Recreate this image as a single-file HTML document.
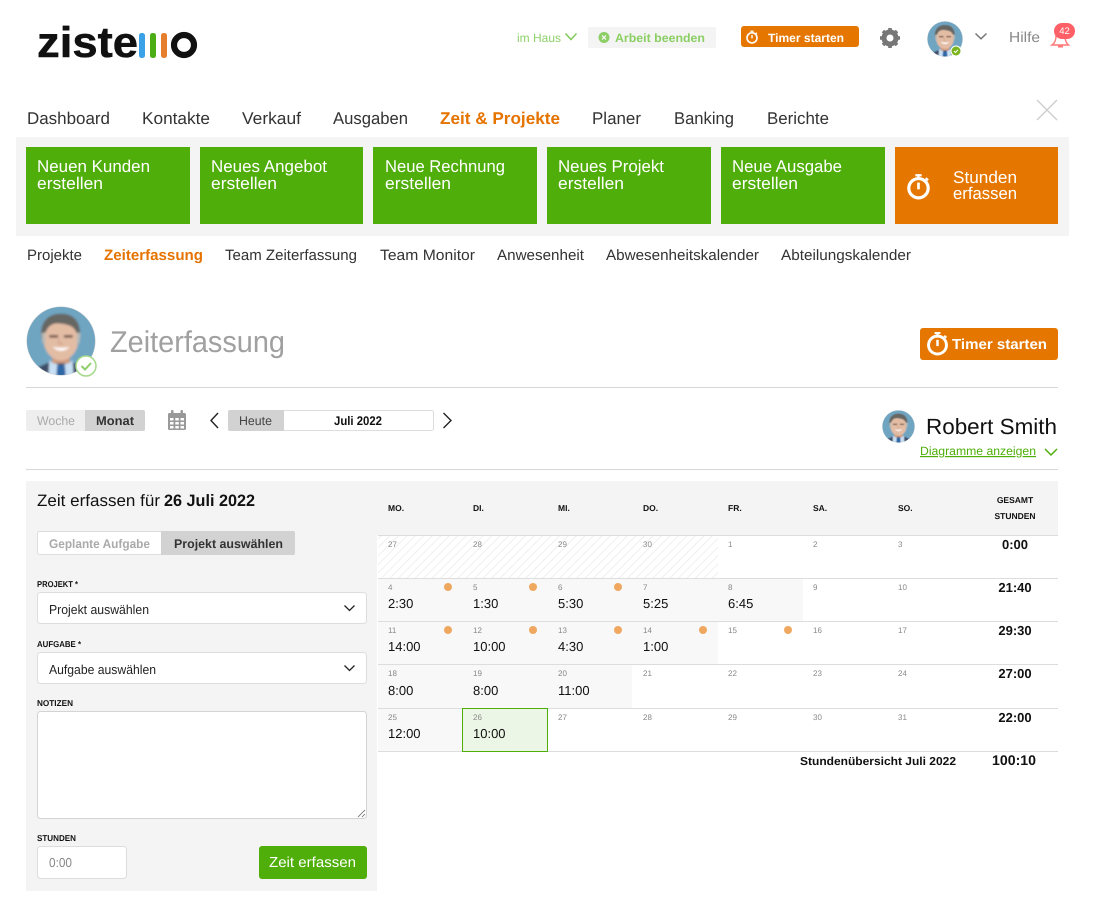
<!DOCTYPE html>
<html lang="de"><head><meta charset="utf-8"><title>Zeiterfassung</title>
<style>
html,body{margin:0;padding:0;background:#fff;width:1115px;height:911px;overflow:hidden}
svg{display:block;font-family:"Liberation Sans",sans-serif;text-rendering:geometricPrecision}
.n{font-size:17px;fill:#333}
.o{font-size:17px;fill:#e57300;font-weight:700}
.w{font-size:17px;fill:#fff}
.s{font-size:15px;fill:#333}
.l{font-size:8.500px;font-weight:700;fill:#111}
.d{font-size:8px;fill:#888}
.h{font-size:13px;fill:#111}
.t{font-size:13px;font-weight:700;fill:#111;text-anchor:middle}
.c{fill:#f0a860}
</style></head><body>
<svg width="1115" height="911" viewBox="0 0 1115 911" xmlns="http://www.w3.org/2000/svg">
<defs>
<pattern id="hatch" width="6" height="6" patternUnits="userSpaceOnUse" patternTransform="rotate(45)"><rect width="6" height="6" fill="#fff"/><rect width="1" height="6" fill="#efefef"/></pattern>
<filter id="soft" x="-10%" y="-10%" width="120%" height="120%"><feGaussianBlur stdDeviation="1"/></filter>
<clipPath id="cc"><circle cx="0" cy="0" r="35"/></clipPath>
<symbol id="av" viewBox="-36 -36 72 72" overflow="visible">
<circle r="35.500" fill="#c9ced2"/>
<g clip-path="url(#cc)"><g filter="url(#soft)">
<rect x="-38" y="-38" width="76" height="76" fill="#6fa5c2"/>
<path d="M-30 38 L-24 27 L-10 21 L10 21 L24 27 L30 38Z" fill="#3f4d68"/>
<path d="M-12 20 L0 26 L12 20 L13 38 L-13 38Z" fill="#c9e0f4"/>
<path d="M-4 25 L4 25 L5 38 L-5 38Z" fill="#2f66a6"/>
<rect x="-9" y="10" width="18" height="13" fill="#cf9c80"/>
<ellipse cx="0" cy="-2" rx="18" ry="22" fill="#e3bca4"/>
<path d="M-20 -2 C-23 -20 -12 -29 1 -28 C14 -28 22 -18 19 -1 L16 -8 C14 -15 8 -17 -1 -18 C-9 -19 -14 -15 -16 -8Z" fill="#666662"/>
<path d="M-20 -8 L-16 -9 L-16 3 L-19 2Z M20 -8 L16 -9 L16 3 L19 2Z" fill="#bdbbb5"/>
<rect x="-12" y="-6" width="9" height="2.500" fill="#6a5044"/><rect x="3" y="-6" width="9" height="2.500" fill="#6a5044"/>
<path d="M-9 6 Q0 14 9 6 Q0 8 -9 6Z" fill="#fff"/>
<path d="M-2 -2 L-2 3 L2 3" fill="none" stroke="#c99a80" stroke-width="1"/>
</g></g>
</symbol>
<symbol id="tm" viewBox="-12 -12 24 24" overflow="visible">
<circle cx="0" cy="1.500" r="8.600" fill="none" stroke="#fff" stroke-width="2.800"/>
<rect x="-2.800" y="-11" width="5.600" height="2" fill="#fff"/><rect x="-1" y="-10" width="2" height="3" fill="#fff"/>
<path d="M6.500-7.500 L8.500-5.500" stroke="#fff" stroke-width="2"/>
<path d="M0 -3.500 V2.500" stroke="#fff" stroke-width="2.400"/>
</symbol>
</defs>

<!-- logo -->
<text x="37" y="57" font-size="43" font-weight="700" fill="#111" stroke="#111" stroke-width="0.500" textLength="101" lengthAdjust="spacingAndGlyphs">ziste</text>
<rect x="139" y="33" width="6" height="25" rx="2.500" fill="#3ba2e8"/>
<rect x="150" y="33" width="6" height="25" rx="2.500" fill="#4cae14"/>
<rect x="161" y="33" width="6" height="25" rx="2.500" fill="#e57f2e"/>
<circle cx="184" cy="45" r="10" fill="none" stroke="#111" stroke-width="6.200"/>

<!-- top bar -->
<text x="517" y="42" font-size="12" fill="#8fd16a" textLength="44" lengthAdjust="spacingAndGlyphs">im Haus</text>
<path d="M565.500 33.500 L571 39.500 L576.500 33.500" fill="none" stroke="#7fca55" stroke-width="1.500"/>
<rect x="588" y="27" width="128" height="21" rx="2" fill="#f4f4f4"/>
<circle cx="604" cy="37.500" r="5.500" fill="#8bcf65"/>
<path d="M602 35.500 L606 39.500 M606 35.500 L602 39.500" stroke="#f4f4f4" stroke-width="1.300"/>
<text x="615" y="42" font-size="12" font-weight="700" fill="#8bcf65" textLength="90" lengthAdjust="spacingAndGlyphs">Arbeit beenden</text>
<rect x="741" y="26" width="118" height="21" rx="3" fill="#e57700"/>
<use href="#tm" x="745" y="30" width="14" height="14"/>
<text x="768" y="42" font-size="12" font-weight="700" fill="#fff" textLength="76" lengthAdjust="spacingAndGlyphs">Timer starten</text>
<g transform="translate(890 38)" fill="#777">
<circle r="6" fill="none" stroke="#777" stroke-width="5"/>
<g stroke="#777" stroke-width="3.600"><path d="M0-10V-7M0 7V10M-10 0H-7M7 0H10M-7-7L-5-5M5 5L7 7M-7 7L-5 5M5-5L7-7"/></g>
</g>
<use href="#av" x="927" y="21" width="36" height="36"/>
<circle cx="956" cy="51" r="5.500" fill="#fff"/><circle cx="956" cy="51" r="4.500" fill="#7ab51d"/>
<path d="M954 51 L955.500 52.500 L958 49.800" fill="none" stroke="#fff" stroke-width="1"/>
<path d="M975.500 33.500 L981 38.800 L986.500 33.500" fill="none" stroke="#777" stroke-width="1.500"/>
<text x="1009" y="42" font-size="14.500" fill="#888" textLength="31" lengthAdjust="spacingAndGlyphs">Hilfe</text>
<path d="M1052 45 C1055 43 1056 40 1056 36 C1056 32 1058 30 1060 30 C1063 30 1065 33 1065 36 C1065 40 1066 43 1068.500 45Z" fill="#fff" stroke="#f77" stroke-width="1.400"/>
<path d="M1058 46.500 H1063" stroke="#f77" stroke-width="2"/>
<rect x="1054" y="23" width="21" height="16" rx="8" fill="#ff5f66"/>
<text x="1064.500" y="34" font-size="9.500" fill="#fff" text-anchor="middle">42</text>

<!-- main nav -->
<text class="n" x="27" y="124" textLength="83" lengthAdjust="spacingAndGlyphs">Dashboard</text>
<text class="n" x="142" y="124" textLength="68" lengthAdjust="spacingAndGlyphs">Kontakte</text>
<text class="n" x="242" y="124" textLength="59" lengthAdjust="spacingAndGlyphs">Verkauf</text>
<text class="n" x="333" y="124" textLength="75" lengthAdjust="spacingAndGlyphs">Ausgaben</text>
<text class="o" x="440" y="124" textLength="120" lengthAdjust="spacingAndGlyphs">Zeit &amp; Projekte</text>
<text class="n" x="592" y="124" textLength="49" lengthAdjust="spacingAndGlyphs">Planer</text>
<text class="n" x="674" y="124" textLength="60" lengthAdjust="spacingAndGlyphs">Banking</text>
<text class="n" x="767" y="124" textLength="62" lengthAdjust="spacingAndGlyphs">Berichte</text>
<path d="M1037 100 L1057 120 M1057 100 L1037 120" stroke="#ccc" stroke-width="1.300"/>

<!-- action band -->
<rect x="16" y="137" width="1053" height="99" fill="#f4f4f4"/>
<rect x="26" y="147" width="164" height="77" fill="#4fae0a"/>
<rect x="200" y="147" width="163" height="77" fill="#4fae0a"/>
<rect x="373" y="147" width="164" height="77" fill="#4fae0a"/>
<rect x="547" y="147" width="164" height="77" fill="#4fae0a"/>
<rect x="721" y="147" width="164" height="77" fill="#4fae0a"/>
<rect x="895" y="147" width="163" height="77" fill="#e57700"/>
<text class="w" x="37" y="172" textLength="113" lengthAdjust="spacingAndGlyphs">Neuen Kunden</text>
<text class="w" x="37" y="189" textLength="66" lengthAdjust="spacingAndGlyphs">erstellen</text>
<text class="w" x="211" y="172" textLength="116" lengthAdjust="spacingAndGlyphs">Neues Angebot</text>
<text class="w" x="211" y="189" textLength="66" lengthAdjust="spacingAndGlyphs">erstellen</text>
<text class="w" x="385" y="172" textLength="120" lengthAdjust="spacingAndGlyphs">Neue Rechnung</text>
<text class="w" x="385" y="189" textLength="66" lengthAdjust="spacingAndGlyphs">erstellen</text>
<text class="w" x="558" y="172" textLength="106" lengthAdjust="spacingAndGlyphs">Neues Projekt</text>
<text class="w" x="558" y="189" textLength="66" lengthAdjust="spacingAndGlyphs">erstellen</text>
<text class="w" x="732" y="172" textLength="110" lengthAdjust="spacingAndGlyphs">Neue Ausgabe</text>
<text class="w" x="732" y="189" textLength="66" lengthAdjust="spacingAndGlyphs">erstellen</text>
<use href="#tm" x="905" y="173" width="27" height="27"/>
<text class="w" x="953" y="183" textLength="64" lengthAdjust="spacingAndGlyphs">Stunden</text>
<text class="w" x="953" y="199" textLength="64" lengthAdjust="spacingAndGlyphs">erfassen</text>

<!-- sub nav -->
<text class="s" x="27" y="260" textLength="55" lengthAdjust="spacingAndGlyphs">Projekte</text>
<text class="s" x="104" y="260" textLength="99" lengthAdjust="spacingAndGlyphs" style="font-weight:700;fill:#e57300">Zeiterfassung</text>
<text class="s" x="225" y="260" textLength="132" lengthAdjust="spacingAndGlyphs">Team Zeiterfassung</text>
<text class="s" x="380" y="260" textLength="95" lengthAdjust="spacingAndGlyphs">Team Monitor</text>
<text class="s" x="497" y="260" textLength="87" lengthAdjust="spacingAndGlyphs">Anwesenheit</text>
<text class="s" x="606" y="260" textLength="153" lengthAdjust="spacingAndGlyphs">Abwesenheitskalender</text>
<text class="s" x="781" y="260" textLength="130" lengthAdjust="spacingAndGlyphs">Abteilungskalender</text>

<!-- page header -->
<use href="#av" x="26" y="306" width="70" height="70"/>
<circle cx="86" cy="366" r="10" fill="#fff" stroke="#a5d98a" stroke-width="1.500"/>
<path d="M81.500 366 L85 369.500 L91 363" fill="none" stroke="#8fcf6c" stroke-width="2"/>
<text x="110" y="352" font-size="30" fill="#a0a0a0" textLength="175" lengthAdjust="spacingAndGlyphs">Zeiterfassung</text>
<rect x="920" y="328" width="138" height="32" rx="3" fill="#e57700"/>
<use href="#tm" x="925" y="331" width="25" height="25"/>
<text x="952" y="349" font-size="14.500" font-weight="700" fill="#fff" textLength="95" lengthAdjust="spacingAndGlyphs">Timer starten</text>
<rect x="26" y="387" width="1032" height="1" fill="#d8d8d8"/>

<!-- toolbar -->
<rect x="26" y="410" width="119" height="21" rx="2" fill="#eee"/>
<path d="M85 410 H143 a2 2 0 0 1 2 2 V429 a2 2 0 0 1 -2 2 H85Z" fill="#d2d2d2"/>
<text x="37" y="425" font-size="12.500" fill="#aaa" textLength="38" lengthAdjust="spacingAndGlyphs">Woche</text>
<text x="96" y="425" font-size="12.500" font-weight="700" fill="#333" textLength="38" lengthAdjust="spacingAndGlyphs">Monat</text>
<g fill="#999">
<rect x="168" y="413" width="18" height="17" rx="1.500"/>
<rect x="171" y="410" width="2.500" height="5" rx="1"/><rect x="180.500" y="410" width="2.500" height="5" rx="1"/>
<g fill="#fff"><rect x="170" y="418" width="3.500" height="2.500"/><rect x="175.300" y="418" width="3.500" height="2.500"/><rect x="180.500" y="418" width="3.500" height="2.500"/>
<rect x="170" y="422" width="3.500" height="2.500"/><rect x="175.300" y="422" width="3.500" height="2.500"/><rect x="180.500" y="422" width="3.500" height="2.500"/>
<rect x="170" y="426" width="3.500" height="2.500"/><rect x="175.300" y="426" width="3.500" height="2.500"/><rect x="180.500" y="426" width="3.500" height="2.500"/></g>
</g>
<path d="M218 413 L211 420.500 L218 428" fill="none" stroke="#222" stroke-width="1.400"/>
<path d="M443.500 413 L451 420.500 L443.500 428" fill="none" stroke="#222" stroke-width="1.400"/>
<rect x="228.500" y="410.500" width="205" height="20" rx="2" fill="#fff" stroke="#ddd"/>
<path d="M284 410 H230 a2 2 0 0 0 -2 2 V429 a2 2 0 0 0 2 2 H284Z" fill="#d2d2d2"/>
<text x="239" y="425" font-size="12.500" fill="#444" textLength="33" lengthAdjust="spacingAndGlyphs">Heute</text>
<text x="334" y="425" font-size="12.500" font-weight="700" fill="#111" textLength="48" lengthAdjust="spacingAndGlyphs">Juli 2022</text>
<use href="#av" x="882" y="410" width="33" height="33"/>
<text x="926" y="434" font-size="22" fill="#111" textLength="131" lengthAdjust="spacingAndGlyphs">Robert Smith</text>
<text x="920" y="455" font-size="12" fill="#4fae0a" text-decoration="underline" textLength="116" lengthAdjust="spacingAndGlyphs">Diagramme anzeigen</text>
<path d="M1045 449 L1051 455 L1057 449" fill="none" stroke="#4fae0a" stroke-width="1.500"/>
<rect x="26" y="469" width="1032" height="1" fill="#d8d8d8"/>

<!-- left panel -->
<rect x="26" y="481" width="351" height="410" fill="#f4f4f4"/>
<text x="37" y="506" font-size="16.500" fill="#111" textLength="123" lengthAdjust="spacingAndGlyphs">Zeit erfassen für</text>
<text x="164" y="506" font-size="16.500" font-weight="700" fill="#111" textLength="91" lengthAdjust="spacingAndGlyphs">26 Juli 2022</text>
<rect x="37.500" y="531.500" width="257" height="23" rx="2" fill="#fff" stroke="#ddd"/>
<path d="M161 531 H293 a2 2 0 0 1 2 2 V553 a2 2 0 0 1 -2 2 H161Z" fill="#d2d2d2"/>
<text x="49" y="548" font-size="12.500" font-weight="700" fill="#aaa" textLength="101" lengthAdjust="spacingAndGlyphs">Geplante Aufgabe</text>
<text x="174" y="548" font-size="12.500" font-weight="700" fill="#333" textLength="109" lengthAdjust="spacingAndGlyphs">Projekt auswählen</text>

<text class="l" x="37" y="587" textLength="41" lengthAdjust="spacingAndGlyphs">PROJEKT *</text>
<rect x="37.500" y="592.500" width="329" height="31" rx="3" fill="#fff" stroke="#ddd"/>
<text x="49" y="614" font-size="13" fill="#222" textLength="100" lengthAdjust="spacingAndGlyphs">Projekt auswählen</text>
<path d="M344.500 605.500 L349.500 610.500 L354.500 605.500" fill="none" stroke="#222" stroke-width="1.300"/>

<text class="l" x="37" y="647" textLength="44" lengthAdjust="spacingAndGlyphs">AUFGABE *</text>
<rect x="37.500" y="652.500" width="329" height="31" rx="3" fill="#fff" stroke="#ddd"/>
<text x="49" y="674" font-size="13" fill="#222" textLength="107" lengthAdjust="spacingAndGlyphs">Aufgabe auswählen</text>
<path d="M344.500 665.500 L349.500 670.500 L354.500 665.500" fill="none" stroke="#222" stroke-width="1.300"/>

<text class="l" x="37" y="706" textLength="36" lengthAdjust="spacingAndGlyphs">NOTIZEN</text>
<rect x="37.500" y="711.500" width="329" height="107" rx="3" fill="#fff" stroke="#d4d4d4"/>
<path d="M358 817 L365 810 M362 817 L365 814" stroke="#666" stroke-width="0.800"/>

<text class="l" x="37" y="841" textLength="39" lengthAdjust="spacingAndGlyphs">STUNDEN</text>
<rect x="37.500" y="846.500" width="89" height="32" rx="3" fill="#fff" stroke="#ddd"/>
<text x="49" y="867" font-size="13" fill="#888" textLength="23" lengthAdjust="spacingAndGlyphs">0:00</text>
<rect x="259" y="846" width="108" height="33" rx="3" fill="#4fae0a"/>
<text x="269" y="867" font-size="14.500" fill="#fff" textLength="87" lengthAdjust="spacingAndGlyphs">Zeit erfassen</text>

<!-- calendar -->
<rect x="377" y="481" width="681" height="54" fill="#f4f4f4"/>
<text class="l" x="388" y="511">MO.</text><text class="l" x="473" y="511">DI.</text><text class="l" x="558" y="511">MI.</text><text class="l" x="643" y="511">DO.</text><text class="l" x="728" y="511">FR.</text><text class="l" x="813" y="511">SA.</text><text class="l" x="898" y="511">SO.</text>
<text class="l" x="1015" y="503" text-anchor="middle">GESAMT</text><text class="l" x="1015" y="519" text-anchor="middle">STUNDEN</text>

<rect x="378" y="536" width="340" height="42" fill="url(#hatch)"/>
<rect x="378" y="579" width="425" height="42" fill="#f8f8f8"/>
<rect x="378" y="622" width="340" height="42" fill="#f8f8f8"/>
<rect x="378" y="665" width="254" height="43" fill="#f8f8f8"/>
<rect x="378" y="709" width="85" height="42" fill="#f8f8f8"/>
<g fill="#ddd">
<rect x="378" y="535" width="680" height="1"/><rect x="378" y="578" width="680" height="1"/><rect x="378" y="621" width="680" height="1"/><rect x="378" y="664" width="680" height="1"/><rect x="378" y="708" width="680" height="1"/><rect x="378" y="751" width="680" height="1"/>
</g>
<rect x="462.500" y="708.500" width="85" height="43" fill="#ecf6e6" stroke="#4fae0a"/>

<g class="d">
<text x="388" y="547">27</text><text x="473" y="547">28</text><text x="558" y="547">29</text><text x="643" y="547">30</text><text x="728" y="547">1</text><text x="813" y="547">2</text><text x="898" y="547">3</text>
<text x="388" y="590">4</text><text x="473" y="590">5</text><text x="558" y="590">6</text><text x="643" y="590">7</text><text x="728" y="590">8</text><text x="813" y="590">9</text><text x="898" y="590">10</text>
<text x="388" y="633">11</text><text x="473" y="633">12</text><text x="558" y="633">13</text><text x="643" y="633">14</text><text x="728" y="633">15</text><text x="813" y="633">16</text><text x="898" y="633">17</text>
<text x="388" y="676">18</text><text x="473" y="676">19</text><text x="558" y="676">20</text><text x="643" y="676">21</text><text x="728" y="676">22</text><text x="813" y="676">23</text><text x="898" y="676">24</text>
<text x="388" y="720">25</text><text x="473" y="720">26</text><text x="558" y="720">27</text><text x="643" y="720">28</text><text x="728" y="720">29</text><text x="813" y="720">30</text><text x="898" y="720">31</text>
</g>
<g>
<circle class="c" cx="448" cy="587" r="4"/><circle class="c" cx="533" cy="587" r="4"/><circle class="c" cx="618" cy="587" r="4"/>
<circle class="c" cx="448" cy="630" r="4"/><circle class="c" cx="533" cy="630" r="4"/><circle class="c" cx="618" cy="630" r="4"/><circle class="c" cx="703" cy="630" r="4"/><circle class="c" cx="788" cy="630" r="4"/>
</g>
<text class="h" x="388" y="608">2:30</text><text class="h" x="473" y="608">1:30</text><text class="h" x="558" y="608">5:30</text><text class="h" x="643" y="608">5:25</text><text class="h" x="728" y="608">6:45</text>
<text class="h" x="388" y="651">14:00</text><text class="h" x="473" y="651">10:00</text><text class="h" x="558" y="651">4:30</text><text class="h" x="643" y="651">1:00</text>
<text class="h" x="388" y="695">8:00</text><text class="h" x="473" y="695">8:00</text><text class="h" x="558" y="695">11:00</text>
<text class="h" x="388" y="738">12:00</text><text class="h" x="473" y="738">10:00</text>
<text class="t" x="1015" y="549">0:00</text><text class="t" x="1015" y="592">21:40</text><text class="t" x="1015" y="635">29:30</text><text class="t" x="1015" y="678">27:00</text><text class="t" x="1015" y="722">22:00</text>
<text x="800" y="765" font-size="11.500" font-weight="700" fill="#111" textLength="156" lengthAdjust="spacingAndGlyphs">Stundenübersicht Juli 2022</text>
<text x="992" y="765" font-size="14" font-weight="700" fill="#111" textLength="44" lengthAdjust="spacingAndGlyphs">100:10</text>
</svg>
</body></html>
